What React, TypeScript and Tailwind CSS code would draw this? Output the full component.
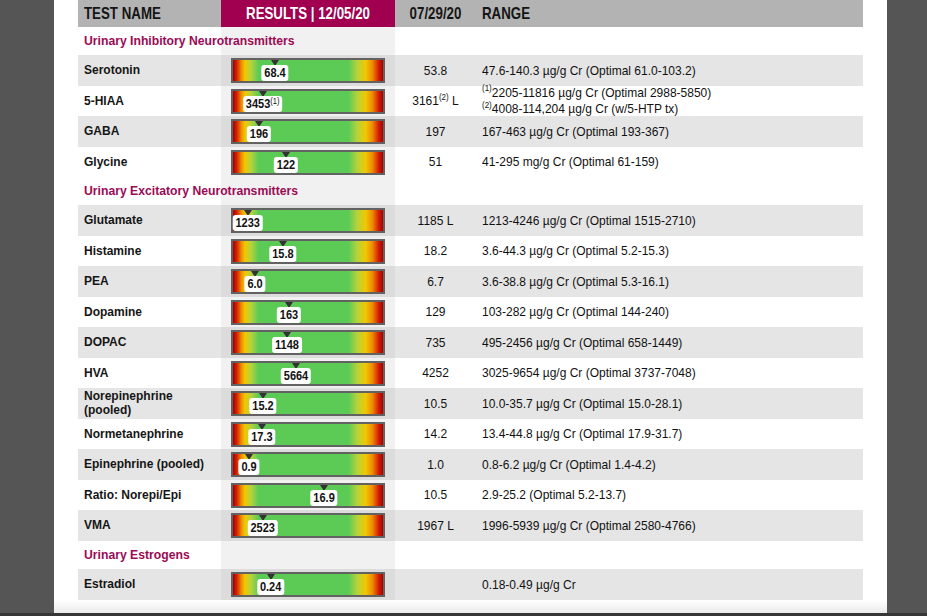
import React from "react";

type Row = {
  name: React.ReactNode;
  pct: number;
  label: string;
  labelSup?: string;
  prev: React.ReactNode;
  range: React.ReactNode;
};

const Sup = ({ children }: { children: React.ReactNode }) => (
  <sup className="text-[8px] font-normal -top-[5px]">{children}</sup>
);

const T = ({ children }: { children: React.ReactNode }) => (
  <span className="inline-block scale-y-[1.12]">{children}</span>
);

const sections: { title: string; rows: Row[] }[] = [
  {
    title: "Urinary Inhibitory Neurotransmitters",
    rows: [
      { name: "Serotonin", pct: 28, label: "68.4", prev: "53.8", range: "47.6-140.3 µg/g Cr (Optimal 61.0-103.2)" },
      {
        name: "5-HIAA",
        pct: 19.8,
        label: "3453",
        labelSup: "(1)",
        prev: (
          <>
            3161<Sup>(2)</Sup>&nbsp;L
          </>
        ),
        range: (
          <div className="leading-[15px]">
            <div>
              <Sup>(1)</Sup>2205-11816 µg/g Cr (Optimal 2988-5850)
            </div>
            <div>
              <Sup>(2)</Sup>4008-114,204 µg/g Cr (w/5-HTP tx)
            </div>
          </div>
        ),
      },
      { name: "GABA", pct: 17.3, label: "196", prev: "197", range: "167-463 µg/g Cr (Optimal 193-367)" },
      { name: "Glycine", pct: 35.3, label: "122", prev: "51", range: "41-295 mg/g Cr (Optimal 61-159)" },
    ],
  },
  {
    title: "Urinary Excitatory Neurotransmitters",
    rows: [
      { name: "Glutamate", pct: 9.8, label: "1233", prev: "1185 L", range: "1213-4246 µg/g Cr (Optimal 1515-2710)" },
      { name: "Histamine", pct: 33.3, label: "15.8", prev: "18.2", range: "3.6-44.3 µg/g Cr (Optimal 5.2-15.3)" },
      { name: "PEA", pct: 14.7, label: "6.0", prev: "6.7", range: "3.6-38.8 µg/g Cr (Optimal 5.3-16.1)" },
      { name: "Dopamine", pct: 37.3, label: "163", prev: "129", range: "103-282 µg/g Cr (Optimal 144-240)" },
      { name: "DOPAC", pct: 36, label: "1148", prev: "735", range: "495-2456 µg/g Cr (Optimal 658-1449)" },
      { name: "HVA", pct: 42, label: "5664", prev: "4252", range: "3025-9654 µg/g Cr (Optimal 3737-7048)" },
      {
        name: (
          <div className="leading-[13px]">
            Norepinephrine
            <br />
            (pooled)
          </div>
        ),
        pct: 20,
        label: "15.2",
        prev: "10.5",
        range: "10.0-35.7 µg/g Cr (Optimal 15.0-28.1)",
      },
      { name: "Normetanephrine", pct: 19.3, label: "17.3", prev: "14.2", range: "13.4-44.8 µg/g Cr (Optimal 17.9-31.7)" },
      { name: "Epinephrine (pooled)", pct: 10.7, label: "0.9", prev: "1.0", range: "0.8-6.2 µg/g Cr (Optimal 1.4-4.2)" },
      { name: "Ratio: Norepi/Epi", pct: 60.7, label: "16.9", prev: "10.5", range: "2.9-25.2 (Optimal 5.2-13.7)" },
      { name: "VMA", pct: 19.8, label: "2523", prev: "1967 L", range: "1996-5939 µg/g Cr (Optimal 2580-4766)" },
    ],
  },
  {
    title: "Urinary Estrogens",
    rows: [{ name: "Estradiol", pct: 25.1, label: "0.24", prev: "", range: "0.18-0.49 µg/g Cr" }],
  },
];

function Gauge({ pct, label, sup }: { pct: number; label: string; sup?: string }) {
  return (
    <div className="relative w-[154px] h-[25px] border-2 border-[#626262] bg-[linear-gradient(to_right,#a80000_0%,#d42000_2.5%,#ee8a00_5.5%,#f0c800_8%,#b8d23a_12%,#5ccb55_17%,#5ccb55_77%,#b8d23a_83%,#f0c800_88.5%,#ee8a00_93%,#d42000_97%,#a80000_100%)]">
      <div className="absolute top-0" style={{ left: `${pct}%` }}>
        <div className="absolute left-0 top-0 -translate-x-1/2 w-0 h-0 border-l-[4px] border-r-[4px] border-t-[6px] border-l-transparent border-r-transparent border-t-[#333]" />
        <div className="absolute left-0 top-[5px] -translate-x-1/2 h-[16px] px-[3px] bg-white rounded-[3px] text-[11px] leading-[16px] font-bold text-[#111] whitespace-nowrap">
          <span className="inline-block scale-y-[1.12]">
            {label}
            {sup && <sup className="text-[7.5px] font-normal -top-[4px]">{sup}</sup>}
          </span>
        </div>
      </div>
    </div>
  );
}

function DataRow({ row, gray }: { row: Row; gray: boolean }) {
  return (
    <div
      className={`grid grid-cols-[143px_174px_81px_1fr] ${gray ? "h-[31px] bg-[#e5e5e5]" : "h-[30px] bg-white"}`}
    >
      <div className="flex items-center pl-[6px] pb-[1px] text-[12px] font-bold text-[#151515]">
        <T>{row.name}</T>
      </div>
      <div className={`flex items-center pl-[10px] ${gray ? "bg-[#dcdcdc]" : "bg-[#f1f1f1]"}`}>
        <Gauge pct={row.pct} label={row.label} sup={row.labelSup} />
      </div>
      <div className="flex items-center justify-center text-[12px] text-[#111]">
        <T>{row.prev}</T>
      </div>
      <div className="flex items-center pl-[6px] text-[12px] text-[#111]">
        <T>{row.range}</T>
      </div>
    </div>
  );
}

function SectionRow({ title }: { title: string }) {
  return (
    <div className="grid grid-cols-[143px_174px_81px_1fr] bg-white h-[28px]">
      <div className="relative z-10 flex items-center pl-[6px] whitespace-nowrap text-[12.2px] font-bold text-[#9b0a55]">
        <T>{title}</T>
      </div>
      <div className="bg-[#f1f1f1]" />
      <div />
      <div />
    </div>
  );
}

export default function App() {
  return (
    <div className="w-[927px] h-[616px] bg-[#555] flex flex-col overflow-hidden font-['Liberation_Sans',Arial,sans-serif]">
      <div className="h-[613px] flex pl-[54px]">
        <div className="w-[833px] h-full bg-white flex flex-col">
          <div className="px-[24px]">
            <div className="grid grid-cols-[143px_174px_81px_1fr] h-[27px] bg-[#b3b3b3] text-[13.3px] font-bold text-[#151515]">
              <div className="flex items-center pl-[6px]">
                <span className="inline-block scale-y-[1.18]">TEST NAME</span>
              </div>
              <div className="flex items-center justify-center bg-[#a0004f] text-white">
                <span className="inline-block scale-y-[1.18]">RESULTS | 12/05/20</span>
              </div>
              <div className="flex items-center justify-center">
                <span className="inline-block scale-y-[1.18]">07/29/20</span>
              </div>
              <div className="flex items-center pl-[6px]">
                <span className="inline-block scale-y-[1.18]">RANGE</span>
              </div>
            </div>
            {sections.map((s) => (
              <div key={s.title}>
                <SectionRow title={s.title} />
                {s.rows.map((r, i) => (
                  <DataRow key={i} row={r} gray={i % 2 === 0} />
                ))}
              </div>
            ))}
          </div>
          <div className="flex-1 bg-gradient-to-b from-white to-[#ebebeb]" />
        </div>
      </div>
      <div className="h-[3px] bg-[#363636]" />
    </div>
  );
}
